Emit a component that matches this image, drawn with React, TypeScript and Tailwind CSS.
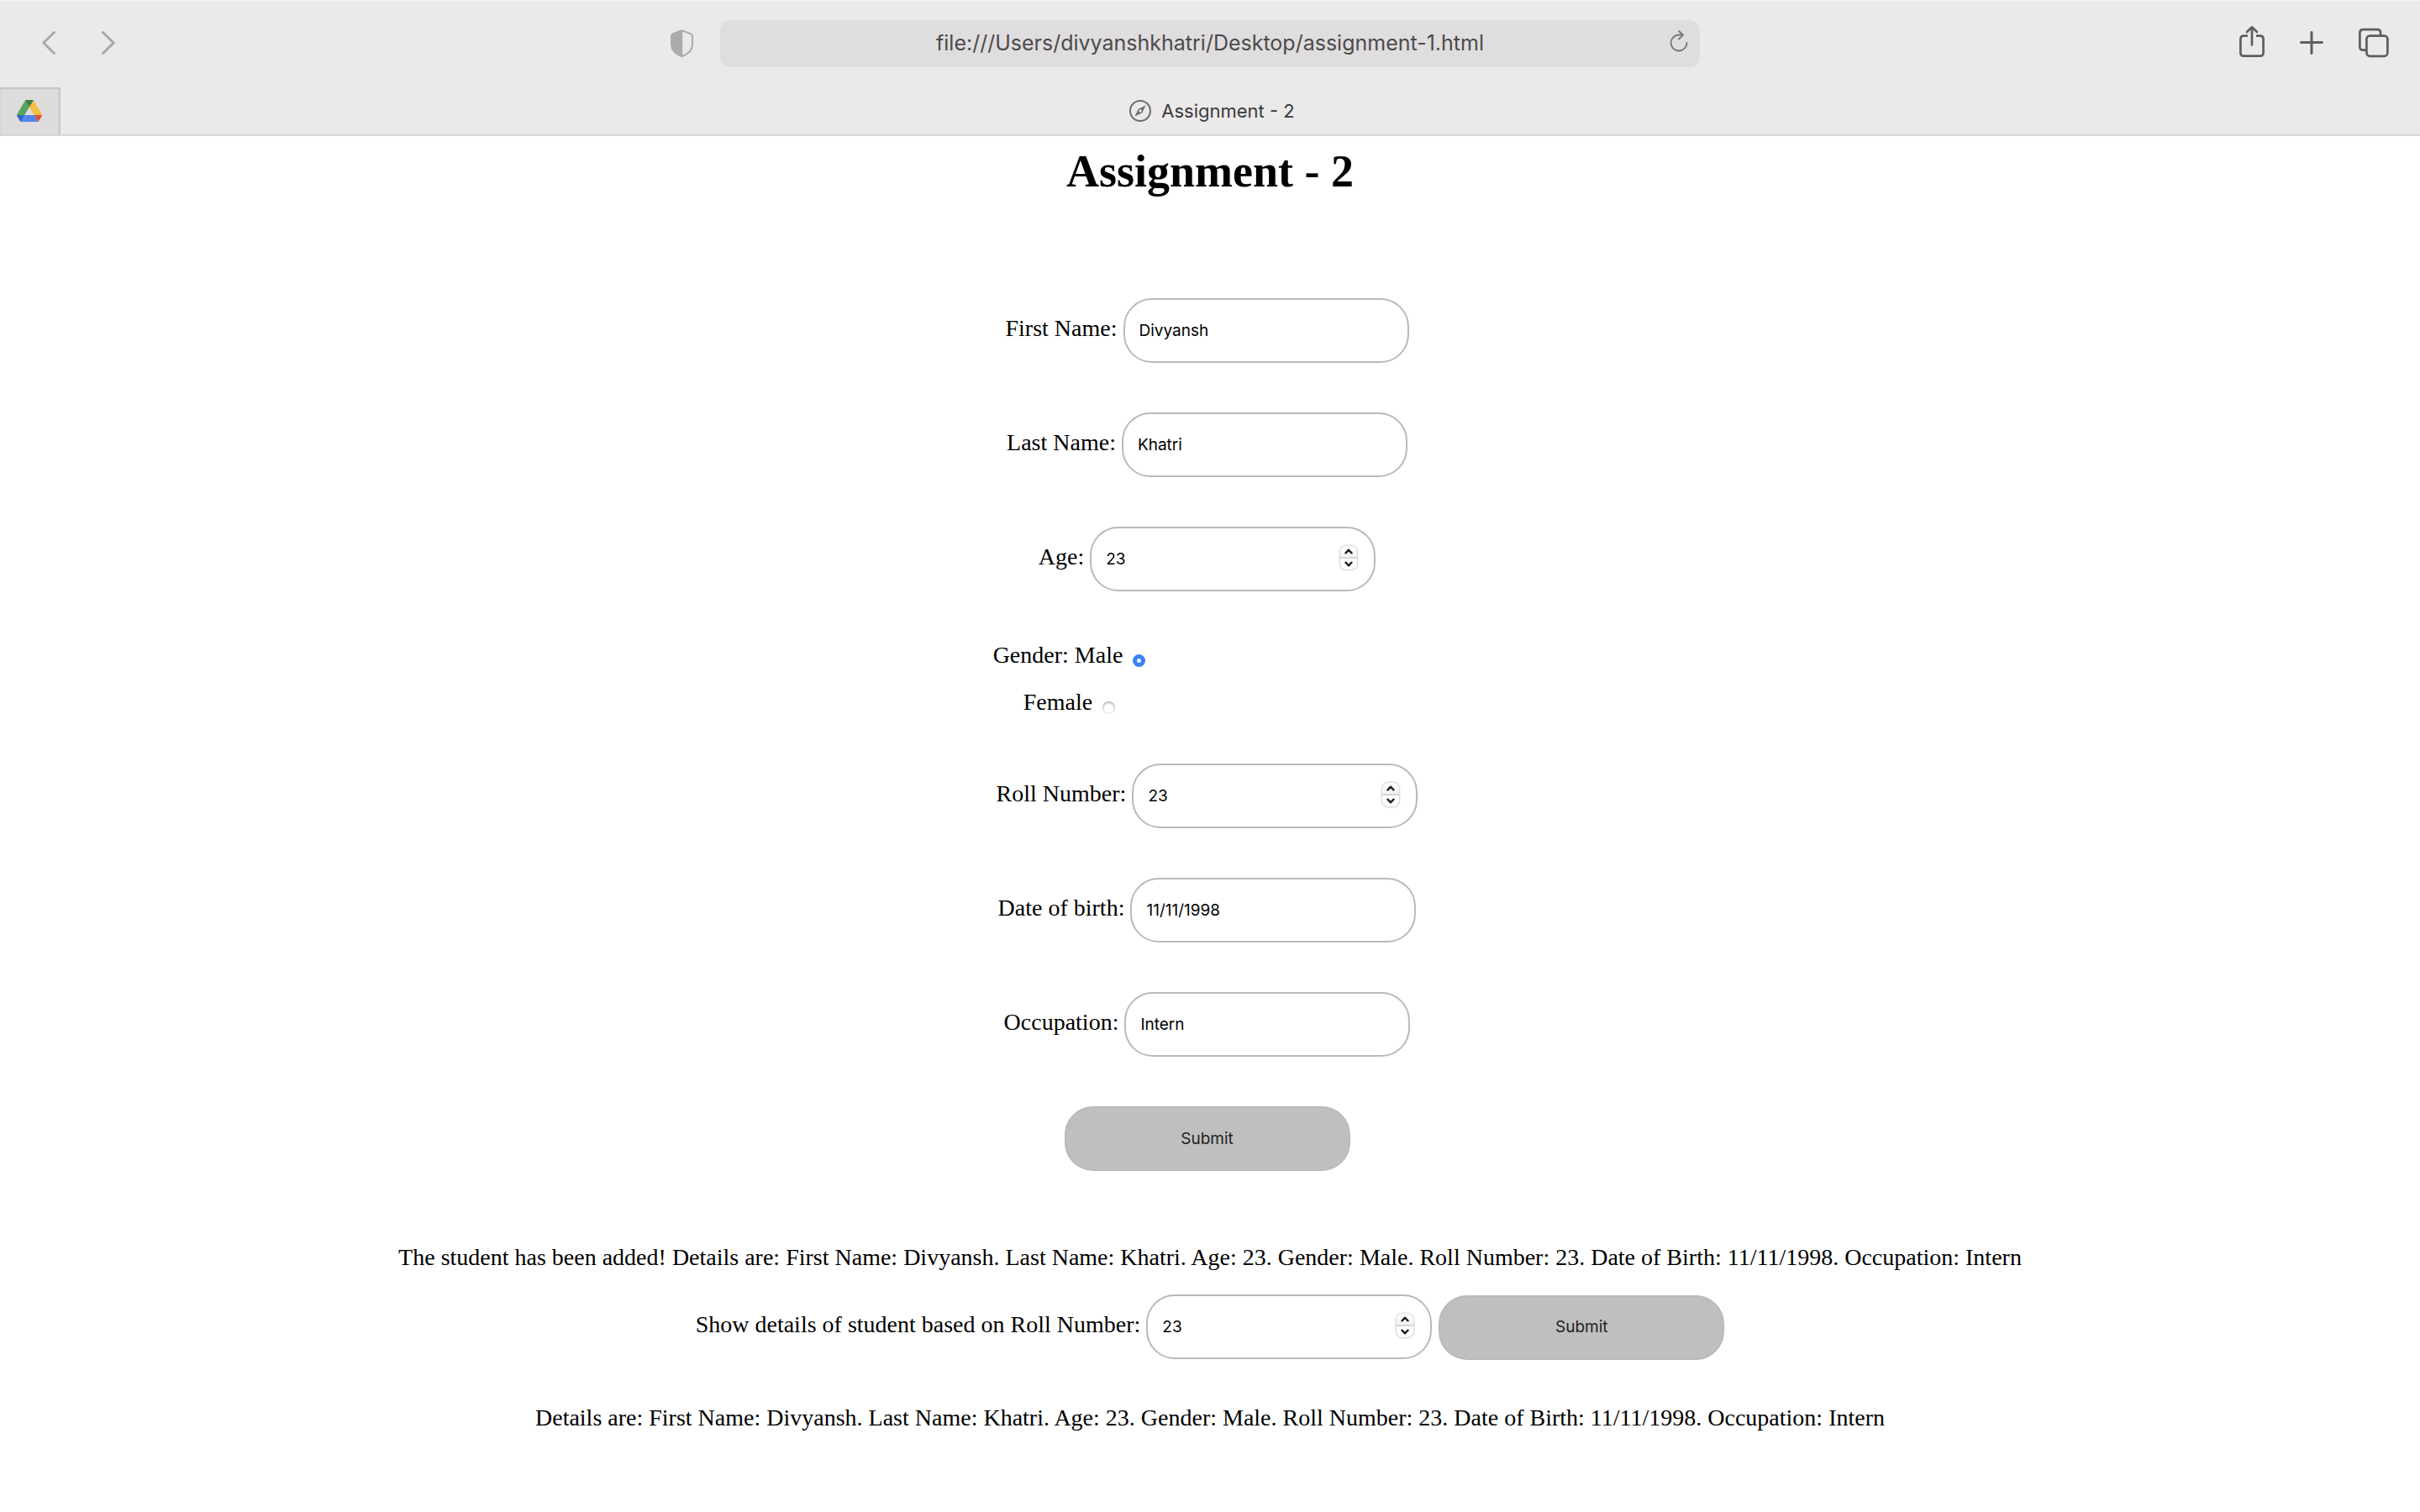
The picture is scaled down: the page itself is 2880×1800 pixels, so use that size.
import React, { useId, useState } from "react";

const serif = "font-['Liberation_Serif',serif]";
const sans = "font-['Inter',sans-serif]";

const fieldClass =
  "h-[77px] w-[340px] rounded-[34px] border-2 border-[#b9b9b9] bg-white px-[17px] text-[19px] text-black outline-none " +
  "[appearance:textfield] [&::-webkit-inner-spin-button]:appearance-none [&::-webkit-outer-spin-button]:appearance-none " +
  "font-['Inter',sans-serif]";

function BackIcon() {
  return (
    <svg width="16" height="44" viewBox="0 0 16 44" fill="none" stroke="#a9a8a9" strokeWidth="3" strokeLinecap="round" strokeLinejoin="round">
      <path d="M14.5 8.5 1.8 21l12.700 12.500" />
    </svg>
  );
}

function ForwardIcon() {
  return (
    <svg width="16" height="44" viewBox="0 0 16 44" fill="none" stroke="#a9a8a9" strokeWidth="3" strokeLinecap="round" strokeLinejoin="round">
      <path d="M1.500 8.500 14.200 21 1.500 33.500" />
    </svg>
  );
}

function ShieldIcon() {
  return (
    <svg width="27" height="44" viewBox="0 0 27 44">
      <path d="M13.500 6.200 24 10.200q2 .8 2 2.800v10c0 7-5.500 11.500-12.500 14.200C6.500 34.500 1 30 1 23V13q0-2 2-2.800Z" fill="none" stroke="#acabac" strokeWidth="2" strokeLinejoin="round" />
      <path d="M13.500 6.200v31C6.500 34.500 1 30 1 23V13q0-2 2-2.800Z" fill="#acabac" />
      <path d="M13.500 6.200v30.500" stroke="#acabac" strokeWidth="1.500" />
    </svg>
  );
}

function ReloadIcon() {
  return (
    <svg width="22" height="26" viewBox="0 0 22 26" fill="none" stroke="#757475" strokeWidth="1.800" strokeLinecap="round" strokeLinejoin="round">
      <path d="M20.500 15a9.500 9.500 0 1 1-9.500-9.500h4.500" />
      <path d="M11 1l5 4.700-5 5" />
    </svg>
  );
}

function ShareIcon() {
  return (
    <svg width="30" height="44" viewBox="0 0 30 44" fill="none" stroke="#5f5d5e" strokeWidth="2.700" strokeLinecap="butt" strokeLinejoin="round">
      <path d="M10 12.700H5.400q-4 0-4 4v16q0 4 4 4h19.200q4 0 4-4v-16q0-4-4-4H20" />
      <path d="M15 3v20.500M9 8l6-5.700L21 8" strokeLinecap="round" />
    </svg>
  );
}

function PlusIcon() {
  return (
    <svg width="28" height="44" viewBox="0 0 28 44" fill="none" stroke="#5f5d5e" strokeWidth="3" strokeLinecap="round">
      <path d="M14 8.500v25M1.500 20.500h25" />
    </svg>
  );
}

function TabsIcon() {
  return (
    <svg width="36" height="44" viewBox="0 0 36 44" fill="none" stroke="#5f5d5e" strokeWidth="2.700" strokeLinejoin="round">
      <path d="M9 29.700H5.400q-4 0-4-4V9.200q0-4 4-4h16.700q4 0 4 4v3" />
      <rect x="9.400" y="12.600" width="25" height="24.200" rx="4" />
    </svg>
  );
}

function DriveIcon() {
  return (
    <svg width="30" height="26" viewBox="0 0 30 26">
      <path d="M10 .5 0 17.500 4.500 26 15 8.500Z" fill="#58a55c" />
      <path d="M10 .5Q10.500 0 11 0h8q.6 0 1 .5l-5 8Z" fill="#3c7d40" />
      <path d="M20 .5 15 8.500l5.500 9.500H30q-.2-1-.6-1.700Z" fill="#f2bf42" />
      <path d="M0 18h9.500L5 26q-.8-.3-1.200-1L.6 19.700Q0 18.700 0 18Z" fill="#3366cc" />
      <path d="M9.500 18h11l4.500 8H5Z" fill="#5084ee" />
      <path d="M20.500 18H30q0 .8-.6 1.700L26.200 25q-.4.7-1.200 1Z" fill="#d8523f" />
      <path d="M15 8.500 20.500 18h-11Z" fill="#dedcdd" />
    </svg>
  );
}

function CompassIcon() {
  return (
    <svg width="26" height="26" viewBox="0 0 26 26">
      <circle cx="13" cy="13" r="12" fill="none" stroke="#6f6e6f" strokeWidth="2" />
      <path d="M19.500 6.500 15.300 15.200 6.500 19.500 10.700 10.800Z" fill="#6f6e6f" />
      <circle cx="13" cy="13" r="1.700" fill="#ebe9ea" />
    </svg>
  );
}

function Browser() {
  return (
    <header className={`${sans} border-b-2 border-[#d8d7d8] bg-[#ebe9ea] shadow-[inset_0_1px_0_#f6f5f6]`}>
      <div className="grid h-[104px] grid-cols-[1fr_1166px_1fr] items-center">
        <div className="flex items-center pr-8 pl-[50px]">
          <button type="button" aria-label="Back" className="mr-[55px]"><BackIcon /></button>
          <button type="button" aria-label="Forward"><ForwardIcon /></button>
          <button type="button" aria-label="Privacy report" className="ml-auto"><ShieldIcon /></button>
        </div>
        <div className="relative">
          <input
            type="text"
            aria-label="Address"
            defaultValue="file:///Users/divyanshkhatri/Desktop/assignment-1.html"
            className="h-14 w-full rounded-xl bg-[#dfddde] px-14 pb-0.5 text-center text-[25px] text-[#4c4b4c] outline-none"
          />
          <button type="button" aria-label="Reload" className="absolute top-3 right-3.5"><ReloadIcon /></button>
        </div>
        <div className="flex items-center justify-end gap-[42px] pr-[37px]">
          <button type="button" aria-label="Share"><ShareIcon /></button>
          <button type="button" aria-label="New tab"><PlusIcon /></button>
          <button type="button" aria-label="Tab overview"><TabsIcon /></button>
        </div>
      </div>
      <nav className="flex h-14">
        <button
          type="button"
          aria-label="Google Drive"
          className="flex w-[72px] items-center justify-center border-r-2 border-[#c9c8c9] bg-[#dedcdd] shadow-[inset_0_2px_2px_#c0bfc0]"
        >
          <DriveIcon />
        </button>
        <button type="button" className="flex flex-1 items-center justify-center gap-3 pr-[67px] text-[22px] text-[#3b3a3b]">
          <CompassIcon />
          Assignment - 2
        </button>
      </nav>
    </header>
  );
}

function Stepper({ onStep }: { onStep: (by: number) => void }) {
  return (
    <span className="absolute top-[23px] right-[22px] flex h-7 w-5 flex-col overflow-hidden rounded-[7px] bg-white shadow-[0_0_3px_rgba(0,0,0,0.4)]">
      <button type="button" aria-label="Increase" onClick={() => onStep(1)} className="flex flex-1 items-center justify-center border-b-2 border-[#d6d6d6] bg-gradient-to-b from-white to-[#f2f2f2]">
        <svg width="10" height="7" viewBox="0 0 10 7" fill="none" stroke="#222" strokeWidth="2.400" strokeLinecap="round" strokeLinejoin="round">
          <path d="M1.500 5.300 5 1.700l3.500 3.600" />
        </svg>
      </button>
      <button type="button" aria-label="Decrease" onClick={() => onStep(-1)} className="flex flex-1 items-center justify-center">
        <svg width="10" height="7" viewBox="0 0 10 7" fill="none" stroke="#222" strokeWidth="2.400" strokeLinecap="round" strokeLinejoin="round">
          <path d="M1.500 1.700 5 5.300l3.500-3.600" />
        </svg>
      </button>
    </span>
  );
}

function Field({ label, value, numeric = false }: { label: string; value: string; numeric?: boolean }) {
  const id = useId();
  const [text, setText] = useState(value);
  return (
    <div className="flex items-baseline gap-[7px]">
      <label htmlFor={id}>{label}</label>
      <span className="relative">
        <input id={id} type={numeric ? "number" : "text"} value={text} onChange={(e) => setText(e.target.value)} className={fieldClass} />
        {numeric && <Stepper onStep={(by) => setText(String(Number(text) + by))} />}
      </span>
    </div>
  );
}

function Choice({ label, checked = false }: { label: string; checked?: boolean }) {
  const id = useId();
  return (
    <div className="flex items-end leading-7">
      <label htmlFor={id}>{label}</label>
      <input
        id={id}
        type="radio"
        name="gender"
        defaultChecked={checked}
        className="mr-[328px] ml-3 size-[15px] appearance-none rounded-full bg-white shadow-[inset_0_1px_3px_rgba(0,0,0,0.45)] checked:border-[5px] checked:border-[#3b82f7] checked:shadow-none"
      />
    </div>
  );
}

function Submit() {
  return (
    <button type="submit" className={`${sans} h-[77px] w-[340px] rounded-[34px] border-2 border-[#bababa] bg-[#bfbfbf] text-[19px] text-[#222]`}>
      Submit
    </button>
  );
}

const details =
  "Details are: First Name: Divyansh. Last Name: Khatri. Age: 23. Gender: Male. Roll Number: 23. Date of Birth: 11/11/1998. Occupation: Intern";

export default function App() {
  const stop = (e: React.FormEvent) => e.preventDefault();
  return (
    <div className="min-h-screen bg-white text-black antialiased">
      <Browser />
      <main className={`${serif} flex flex-col items-center pt-2.5 text-[28px] leading-8`}>
        <h1 className="text-[54px] leading-[64px] font-bold">Assignment - 2</h1>
        <form onSubmit={stop} className="mt-[119px] flex flex-col items-center gap-[59px] pr-[7px]">
          <Field label="First Name:" value="Divyansh" />
          <Field label="Last Name:" value="Khatri" />
          <Field label="Age:" value="23" numeric />
          <div className="flex flex-col items-center gap-7 pt-[3px]">
            <Choice label="Gender: Male" checked />
            <Choice label="Female" />
          </div>
          <Field label="Roll Number:" value="23" numeric />
          <Field label="Date of birth:" value="11/11/1998" />
          <Field label="Occupation:" value="Intern" />
          <Submit />
        </form>
        <p className="mt-[87px]">The student has been added! {details}</p>
        <form onSubmit={stop} className="mt-7 flex items-baseline gap-2">
          <Field label="Show details of student based on Roll Number:" value="23" numeric />
          <Submit />
        </form>
        <p className="mt-[53px]">{details}</p>
      </main>
    </div>
  );
}
